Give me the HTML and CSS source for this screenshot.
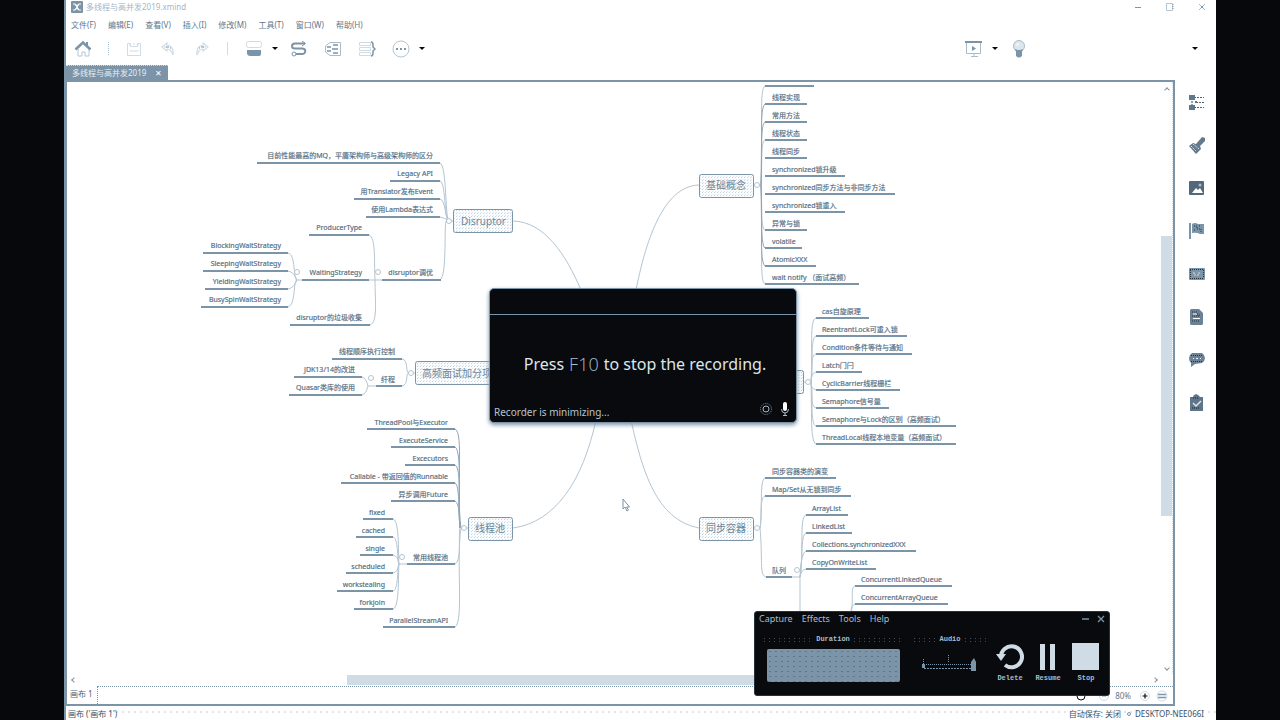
FILE: index.html
```
<!DOCTYPE html>
<html lang="zh-CN">
<head>
<meta charset="utf-8">
<title>多线程与高并发2019.xmind</title>
<link rel="stylesheet" href="styles.css">
</head>
<body>
<div class="app">
  <header class="titlebar">
    <svg class="logo" width="12" height="12" viewBox="0 0 12 12"><rect width="12" height="12" rx="1" fill="#7b94a8"/><path d="M2 3h2l2 2 2-2h2M2 9h2l2-2 2 2h2M4 3l4 6M8 3L4 9" stroke="#fff" stroke-width="1.2" fill="none"/></svg>
    <span class="title">多线程与高并发2019.xmind</span>
    <div class="wincontrols">
      <button aria-label="最小化"><svg width="8" height="8" viewBox="0 0 8 8"><path d="M1 4.500h6" stroke="#7b94a8"/></svg></button>
      <button aria-label="最大化"><svg width="8" height="8" viewBox="0 0 8 8"><path d="M.5.5h6v7h-6z" stroke="#b4c5d2" fill="none"/><path d="M7 1v6" stroke="#7b94a8" stroke-dasharray="1 1"/></svg></button>
      <button aria-label="关闭"><svg width="8" height="8" viewBox="0 0 8 8"><path d="M1 1l6 6M7 1L1 7" stroke="#a9bccb"/><path d="M3 3h2v2H3z" fill="#7b94a8"/></svg></button>
    </div>
  </header>
  <nav class="menubar">
    <button>文件(F)</button><button>编辑(E)</button><button>查看(V)</button><button>插入(I)</button><button>修改(M)</button><button>工具(T)</button><button>窗口(W)</button><button>帮助(H)</button>
  </nav>
  <div class="toolbar">
    <div class="tools">
      <button aria-label="主页"><svg width="18" height="18" viewBox="0 0 18 18"><path d="M4 9v7h4v-4h3v4h4V9" stroke="#b4c5d2" fill="none"/><path d="M1.500 9.500L9 2.500l7.500 7" stroke="#7b94a8" stroke-width="2.600" fill="none"/><path d="M13 2v4" stroke="#7b94a8" stroke-width="2"/></svg></button>
      <i class="sep dotted"></i>
      <button aria-label="保存"><svg width="18" height="16" viewBox="0 0 18 16"><path d="M2.500 2.500h3v3h7v-3h3v12h-13zM5 2v3M9 2v2M13 2v3M4.500 10h9" stroke="#cfdce6" fill="none"/></svg></button>
      <button aria-label="撤销"><svg width="18" height="16" viewBox="0 0 18 16"><path d="M8 2L3 6l5 4V8q4 0 6 6 1-9-6-10zM5 6h3" stroke="#cfdce6" stroke-width="1.200" fill="none"/><path d="M7 6h3M11 7h1" stroke="#7b94a8"/></svg></button>
      <button aria-label="重做"><svg width="18" height="16" viewBox="0 0 18 16"><path d="M10 2l5 4-5 4V8q-4 0-6 6-1-9 6-10zM13 6h-3" stroke="#cfdce6" stroke-width="1.200" fill="none"/><path d="M8 6h3M6 7h1" stroke="#7b94a8"/></svg></button>
      <i class="sep"></i>
      <button class="drop" aria-label="主题"><svg width="18" height="16" viewBox="0 0 18 16"><rect x="1.500" y="0.500" width="15" height="6" rx="2" stroke="#cfdce6" fill="none"/><path d="M2 9h14v4q0 2-2 2H5q-2 0-3-2z" fill="#7b94a8"/></svg><b></b></button>
      <button aria-label="联系"><svg width="18" height="16" viewBox="0 0 18 16"><path d="M15 2.500H5a3 2.500 0 0 0 0 5h7a3 2.500 0 0 1 0 5.500H5" stroke="#7b94a8" stroke-width="2" fill="none"/><path d="M12 0l3.500 2.500L12 5" stroke="#7b94a8" fill="none"/><circle cx="4" cy="13" r="2" fill="#fff" stroke="#7b94a8"/></svg></button>
      <button aria-label="外框"><svg width="18" height="16" viewBox="0 0 18 16"><path d="M1.500 5L6 1.500h10.500v13H6L1.500 11z" stroke="#a9bccb" fill="none"/><path d="M3 6h4M3 10h4M9 4h5M8 8h6M9 12h5" stroke="#7b94a8" stroke-width="1.500"/></svg></button>
      <button aria-label="概要"><svg width="18" height="16" viewBox="0 0 18 16"><path d="M1.500 1.500h11v3h-11zM1.500 6.500h11v3h-11zM1.500 11.500h11v3h-11z" stroke="#cfdce6" fill="none"/><path d="M13 1q2 0 2 3v2l2 2-2 2v2q0 3-2 3" stroke="#7b94a8" stroke-width="1.500" fill="none"/></svg></button>
      <button class="drop" aria-label="更多"><svg width="18" height="18" viewBox="0 0 18 18"><circle cx="9" cy="9" r="8" stroke="#b4c5d2" fill="none"/><path d="M4 8h2v2H4zM8 8h2v2H8zM12 8h2v2h-2z" fill="#7b94a8"/></svg><b></b></button>
    </div>
    <div class="tools right">
      <button class="drop" aria-label="演示"><svg width="18" height="18" viewBox="0 0 18 18"><path d="M1.500 2v11.500h14V2M9 13v4M6 16.500h7" stroke="#a9bccb" fill="none"/><path d="M0 1h17v2H0z" fill="#7b94a8"/><path d="M7 6l4 2.500L7 11z" fill="#7b94a8"/></svg><b></b></button>
      <button aria-label="头脑风暴"><svg width="14" height="18" viewBox="0 0 14 18"><circle cx="7" cy="6" r="5.500" fill="#dce6ed" stroke="#a9bccb"/><path d="M3 9q4 2 8 0l-1 3v4l-2 1.500H6L4 16v-4z" fill="#7b94a8"/><path d="M4 5h2V3" stroke="#fff" fill="none"/></svg></button>
    </div>
    <button class="drop last" aria-label="更多工具"><b></b></button>
  </div>
  <div class="tabs"><div class="tab"><span>多线程与高并发2019</span><button aria-label="关闭标签">✕</button></div></div>
  <main class="work">
    <section class="editor">
      <div class="canvasrow">
        <div class="canvas">
          <svg class="map" width="1094" height="592" viewBox="67 82 1094 592">
            <defs><pattern id="dots" width="3" height="3" patternUnits="userSpaceOnUse"><rect width="3" height="3" fill="#fafcfd"/><rect width="1" height="1" fill="#c3d2dd"/><rect x="1" y="2" width="1" height="1" fill="#dce6ed"/></pattern></defs>
            <g class="link">
              <path d="M513 221C545 222 566 255 581 290M513 528C556 522 583 480 596 420M699 185C662 186 645 245 636 290M699 528C656 520 642 470 631 420"/>
              <path d="M440 163C447 165 445 221 449 221M440 181C446 182 444 221 449 221M440 199C446 200 445 221 449 221M440 217Q445 218 449 221M440 280C447 276 444 230 446 221H453"/>
              <path d="M369 235C376 238 374 260 375 280C375 300 378 322 370 325M369 280H382M288 253C296 254 293 280 297 280M288 271Q294 272 297 280M288 289Q294 288 297 280M288 307C296 305 293 280 297 280H302"/>
              <path d="M402 359C409 360 405 373 409 373H415M402 386C409 385 405 373 409 373M362 377Q366 378 368 386Q366 394 362 395M368 386H376"/>
              <path d="M455 627C464 622 456 560 461 528H468M455 564C462 560 458 540 460 528M393 519C400 520 398 560 399 564M393 537C399 538 397 564 399 564M393 555Q398 556 399 564H407M393 573Q398 572 399 564M393 591C399 590 397 564 399 564M393 609C400 608 398 568 399 564"/>
              <path d="M753 185H761M765 86C759 88 763 130 761 185M765 284C759 282 763 240 761 185M765 140C760 142 762 170 761 185M765 230C760 228 762 200 761 185"/>
              <path d="M804 382H811M816 318C809 320 813 350 811 382C812 410 810 442 816 444M816 336C810 337 813 370 811 382M816 354C810 355 813 370 811 382M816 372Q811 373 811 382Q811 389 816 390M816 408C810 407 813 394 811 382M816 426C810 425 813 394 811 382"/>
              <path d="M753 528H760M765 478C759 480 763 510 760 528C763 560 759 575 766 577M765 496C759 498 762 520 760 528M792 577H800M806 515C799 517 804 550 800 577V615M806 533C800 535 803 565 800 577M806 551Q801 552 800 577M806 569Q801 570 800 577M855 586C850 587 854 600 851 615M855 604Q851 605 851 612"/>
            </g>
            <g class="trunk"><path d="M455 429C464 432 456 490 461 528M455 447C462 450 458 500 460 528M455 465C462 468 458 510 460 528M455 483C460 486 458 510 460 528M455 501C460 503 459 520 460 528M765 104C759 108 763 150 761 185M765 266C759 262 763 220 761 185M765 122C760 124 762 160 761 185M765 248C760 246 762 200 761 185"/></g>
            <g class="rule"><path d="M257 163H440M390 181H440M354 199H440M366 217H440M309 235H369M203 253H288M203 271H288M205 289H288M201 307H288M302 280H369M382 280H441M290 325H370M332 359H402M294 377H362M289 395H362M376 386H402M367 429H455M391 447H455M405 465H455M341 483H455M391 501H455M363 519H393M356 537H393M360 555H393M346 573H393M337 591H393M354 609H393M407 564H455M383 627H455"/>
            <path d="M765 86H814M765 104H807M765 122H807M765 140H807M765 158H807M765 176H845M765 194H895M765 212H845M765 230H807M765 248H802M765 266H816M765 284H859M816 318H869M816 336H907M816 354H912M816 372H862M816 390H900M816 408H889M816 426H956M816 444H956M765 478H836M765 496H851M806 515H848M806 533H852M806 551H916M806 569H876M766 577H792M855 586H952M855 604H948"/></g>
            <g class="knob"><circle cx="449" cy="221" r="2.500"/><circle cx="378" cy="272" r="2.500"/><circle cx="297" cy="272" r="2.500"/><circle cx="411" cy="373" r="2.500"/><circle cx="371" cy="378" r="2.500"/><circle cx="464" cy="528" r="2.500"/><circle cx="402" cy="557" r="2.500"/><circle cx="757" cy="185" r="2.500"/><circle cx="808" cy="382" r="2.500"/><circle cx="757" cy="528" r="2.500"/><circle cx="797" cy="570" r="2.500"/></g>
            <g class="box"><rect x="453.500" y="209.500" width="59" height="23" rx="2"/><rect x="415.500" y="361.500" width="90" height="23" rx="2"/><rect x="468.500" y="517.500" width="44" height="23" rx="2"/><rect x="699.500" y="174.500" width="54" height="23" rx="2"/><rect x="740.500" y="370.500" width="63" height="23" rx="2"/><rect x="699.500" y="517.500" width="54" height="23" rx="2"/></g>
            <g class="topic"><text x="461" y="225">Disruptor</text><text x="422" y="377">高频面试加分项</text><text x="475" y="532">线程池</text><text x="706" y="189">基础概念</text><text x="706" y="532">同步容器</text></g>
            <g class="leaf end">
              <text x="433" y="158">目前性能最高的MQ，平庸架构师与高级架构师的区分</text><text x="433" y="176">Legacy API</text><text x="433" y="194">用Translator发布Event</text><text x="433" y="212">使用Lambda表达式</text><text x="362" y="230">ProducerType</text><text x="281" y="248">BlockingWaitStrategy</text><text x="281" y="266">SleepingWaitStrategy</text><text x="281" y="284">YieldingWaitStrategy</text><text x="281" y="302">BusySpinWaitStrategy</text><text x="362" y="275">WaitingStrategy</text><text x="433" y="275">disruptor调优</text><text x="362" y="320">disruptor的垃圾收集</text>
              <text x="395" y="354">线程顺序执行控制</text><text x="355" y="372">JDK13/14的改进</text><text x="355" y="390">Quasar类库的使用</text><text x="395" y="382">纤程</text>
              <text x="448" y="425">ThreadPool与Executor</text><text x="448" y="443">ExecuteService</text><text x="448" y="461">Excecutors</text><text x="448" y="479">Callable - 带返回值的Runnable</text><text x="448" y="497">异步调用Future</text><text x="385" y="515">fixed</text><text x="385" y="533">cached</text><text x="385" y="551">single</text><text x="385" y="569">scheduled</text><text x="385" y="587">workstealing</text><text x="385" y="605">forkjoin</text><text x="448" y="560">常用线程池</text><text x="448" y="623">ParallelStreamAPI</text>
            </g>
            <g class="leaf">
              <text x="772" y="100">线程实现</text><text x="772" y="118">常用方法</text><text x="772" y="136">线程状态</text><text x="772" y="154">线程同步</text><text x="772" y="172">synchronized锁升级</text><text x="772" y="190">synchronized同步方法与非同步方法</text><text x="772" y="208">synchronized锁重入</text><text x="772" y="226">异常与锁</text><text x="772" y="244">volatile</text><text x="772" y="262">AtomicXXX</text><text x="772" y="280">wait notify （面试高频）</text>
              <text x="822" y="314">cas自旋原理</text><text x="822" y="332">ReentrantLock可重入锁</text><text x="822" y="350">Condition条件等待与通知</text><text x="822" y="368">Latch门闩</text><text x="822" y="386">CyclicBarrier线程栅栏</text><text x="822" y="404">Semaphore信号量</text><text x="822" y="422">Semaphore与Lock的区别（高频面试）</text><text x="822" y="440">ThreadLocal线程本地变量（高频面试）</text>
              <text x="772" y="474">同步容器类的演变</text><text x="772" y="492">Map/Set从无锁到同步</text><text x="812" y="511">ArrayList</text><text x="812" y="529">LinkedList</text><text x="812" y="547">Collections.synchronizedXXX</text><text x="812" y="565">CopyOnWriteList</text><text x="772" y="573">队列</text><text x="861" y="582">ConcurrentLinkedQueue</text><text x="861" y="600">ConcurrentArrayQueue</text>
            </g>
            <path d="M623 499v10l2-2 2 4 1.500-1-2-3h3z" fill="#fff" stroke="#7b94a8"/>
          </svg>
        </div>
        <div class="vscroll"><i class="arrow up"></i><div class="vtrack"><div class="vthumb"></div></div><i class="arrow down"></i></div>
      </div>
      <div class="hscroll"><i class="arrow left"></i><div class="htrack"><div class="hthumb"></div></div><i class="arrow rightward"></i></div>
      <div class="sheets"><span class="sheet">画布 1</span><div class="zoom">
        <svg width="12" height="12" viewBox="0 0 12 12"><circle cx="6" cy="6" r="4" fill="none" stroke="#090a0e"/></svg>
        <svg width="12" height="12" viewBox="0 0 12 12"><circle cx="6" cy="6" r="4.500" fill="none" stroke="#cfdce6"/><path d="M4 6h4" stroke="#7b94a8"/></svg>
        <span>80%</span>
        <svg width="12" height="12" viewBox="0 0 12 12"><circle cx="6" cy="6" r="4.500" fill="none" stroke="#cfdce6"/><path d="M3.500 6h5M6 3.500v5" stroke="#090a0e" stroke-width="1.200"/></svg>
        <svg width="12" height="12" viewBox="0 0 12 12"><circle cx="6" cy="6" r="5" fill="none" stroke="#cfdce6"/><path d="M2 4.500h8M2 7.500h8" stroke="#7b94a8" stroke-width="1.500"/></svg>
      </div></div>
    </section>
    <aside class="side">
      <svg width="18" height="18" viewBox="0 0 18 18"><path d="M6 4.500h10M8 9.500h8M6 14.500h10M4 5v9" stroke="#4d6273" stroke-width="1.200" fill="none" stroke-dasharray="2 1"/><path d="M1 2h6v5H1zM1 12h6v5H1zM7 8h2v2H7z" fill="#5f788c"/></svg>
      <svg width="18" height="18" viewBox="0 0 18 18"><path d="M14 1l3 1v3l-5 5 1 3-5 5-7-8 4-3 3 1z" fill="#64798c"/><path d="M5 8l6 5M3 10l5 5" stroke="#dce6ed" stroke-dasharray="2 1"/></svg>
      <svg width="18" height="18" viewBox="0 0 18 18"><rect x="1" y="2" width="15" height="14" rx="1" fill="#53687a"/><path d="M4 14l4-5 2 2 2-2 3 5z" fill="#fff"/><circle cx="12" cy="6" r="1.500" fill="#a9bccb"/></svg>
      <svg width="18" height="18" viewBox="0 0 18 18"><path d="M1 1h2v16H1zM4 2q3-2 6 0h6v10h-4q-4-2-8-1z" fill="#7b94a8"/><path d="M6 4h3v3h4v3M11 4h2M6 8h2" stroke="#26323c" stroke-dasharray="1 1" fill="none"/></svg>
      <svg width="18" height="18" viewBox="0 0 18 18"><rect x="1" y="3" width="16" height="12" rx="1" fill="#7b94a8"/><path d="M2 4.500h14M2 13.500h14M2.500 5v8M15.500 5v8" stroke="#26323c" stroke-dasharray="1 1"/><path d="M5 8h3M10 8h3M6 10h6" stroke="#cfdce6" stroke-dasharray="2 1"/></svg>
      <svg width="18" height="18" viewBox="0 0 18 18"><path d="M3 1h8l4 4v10q0 2-1 2H3q-1 0-1-2V2z" fill="#6b8296"/><path d="M4 4h5v3h3M4 8h8M4 13h8" stroke="#26323c" stroke-dasharray="1 1" fill="none"/><path d="M5 6h4M5 10.500h7" stroke="#fff"/></svg>
      <svg width="18" height="18" viewBox="0 0 18 18"><path d="M4 2h10q3 2 3 5t-3 5l-7 1-4 3v-4q-2-2-2-5t3-5z" fill="#6b8296"/><path d="M3 4.500h12M3 10.500h12" stroke="#26323c" stroke-dasharray="1 1"/><path d="M5 7.500h1M8 7.500h2M12 7.500h1" stroke="#fff"/></svg>
      <svg width="18" height="18" viewBox="0 0 18 18"><path d="M2 3h3q0-2 3-3 3 1 4 3h3v14H2z" fill="#5f768a"/><path d="M5 4h6M4 14h8" stroke="#16202a" stroke-dasharray="1 1"/><path d="M5 9l3 3 5-5" stroke="#dce6ed" stroke-width="1.500" fill="none"/></svg>
    </aside>
  </main>
  <footer class="status"><span>画布 ('画布 1')</span><span class="save">自动保存: 关闭</span><svg width="6" height="6" viewBox="0 0 6 6"><circle cx="3" cy="3" r="1.500" fill="none" stroke="#7b94a8"/></svg><span class="host">DESKTOP-NEE066I</span></footer>
</div>

<div class="notice" role="dialog" aria-label="Recorder">
  <div class="noticehead"></div>
  <p>Press <span class="key">F10</span> to stop the recording.</p>
  <div class="noticefoot"><span>Recorder is minimizing...</span>
    <svg width="34" height="16" viewBox="0 0 34 16"><circle cx="9" cy="7" r="5.500" stroke="#7b94a8" stroke-dasharray="1 1" fill="none"/><circle cx="9" cy="7" r="3" stroke="#a9bccb" fill="none"/><rect x="26" y="0" width="4" height="9" rx="2" fill="#fff"/><path d="M24.500 7q0 4 3.500 4t3.500-4M28 11v3M26 13.500h4" stroke="#a9bccb" fill="none"/></svg>
  </div>
</div>

<div class="recorder" role="dialog" aria-label="Capture">
  <div class="rechead"><button>Capture</button><button>Effects</button><button>Tools</button><button>Help</button><span class="recwin"><button aria-label="Minimize"><svg width="8" height="8" viewBox="0 0 8 8"><path d="M1 4h7" stroke="#7b94a8" stroke-width="1.500"/></svg></button><button aria-label="Close"><svg width="8" height="8" viewBox="0 0 8 8"><path d="M1 1l6 6M7 1L1 7" stroke="#7b94a8" stroke-width="1.300"/></svg></button></span></div>
  <div class="recbody">
    <div class="duration"><div class="legend"><i></i>Duration<i></i></div><div class="screen"></div></div>
    <div class="audio"><div class="legend"><i></i>Audio<i></i></div>
      <svg width="60" height="20" viewBox="0 0 60 20"><path d="M3.500 5v8M28.500 1v8" stroke="#7b94a8" stroke-dasharray="1 1"/><path d="M4 10.500h50" stroke="#7b94a8" stroke-dasharray="1 1"/><path d="M4 14.500h50" stroke="#7b94a8" stroke-dasharray="2 1"/><path d="M2 10h3v4H2zM51 8l3-4 2 4v9h-5z" fill="#7b94a8"/></svg></div>
    <button class="act"><svg width="28" height="28" viewBox="0 0 28 28"><path d="M5 14A10.500 10.500 0 1 1 9 22" fill="none" stroke="#cfdce6" stroke-width="4"/><path d="M0 11h10l-5 7z" fill="#cfdce6"/></svg>Delete</button>
    <button class="act"><svg width="28" height="28" viewBox="0 0 28 28"><path d="M6 1h5v26H6zM16 1h5v26h-5z" fill="#cfdce6"/></svg>Resume</button>
    <button class="act"><svg width="28" height="28" viewBox="0 0 28 28"><rect x="0" y="0" width="27" height="27" fill="#cfdce6"/></svg>Stop</button>
  </div>
</div>
</body>
</html>
```
FILE: styles.css
```
* { box-sizing: border-box; }
body {
  margin: 0;
  height: 100vh;
  overflow: hidden;
  position: relative;
  background: #07080c;
  color: #7b94a8;
  font-family: "Noto Sans", "Noto Sans CJK SC", sans-serif;
  font-size: 8px;
  line-height: 12px;
}
button {
  border: 0;
  padding: 0;
  background: none;
  color: inherit;
  font: inherit;
  display: flex;
  align-items: center;
  white-space: nowrap;
}
svg { display: block; flex: none; }
.app {
  width: 90%;
  height: 100%;
  margin: 0 auto;
  background: #fff;
  border-left: 2px solid #7b94a8;
  display: flex;
  flex-direction: column;
}
.titlebar { height: 14px; flex: none; display: flex; align-items: center; padding: 0 10px 0 5px; gap: 3px; }
.title { color: #a3b6c5; line-height: 14px; }
.wincontrols { margin-left: auto; display: flex; gap: 24px; }
.menubar { height: 20px; flex: none; display: flex; align-items: center; gap: 12px; padding: 2px 0 0 5px; color: #5f788c; }
.toolbar { height: 29px; flex: none; display: flex; align-items: center; padding: 0 18px 0 8px; }
.tools { display: flex; align-items: center; gap: 16px; }
.tools.right { margin-left: auto; gap: 18px; }
.sep { width: 1px; height: 13px; margin-right: 1px; background: #cfdce6; }
.sep.dotted { background: none; border-left: 1px dotted #a9bccb; margin: 0; }
.drop { gap: 9px; margin-right: -4px; }
.drop b { border: 3px solid transparent; border-top-color: #090a0e; border-bottom: 0; }
.drop.last { margin: 0 0 0 166px; }
.tabs { height: 17px; flex: none; display: flex; align-items: flex-end; }
.tab { height: 15px; background: #7b94a8; border-top: 1px dotted #cfdce6; color: #e6edf2; display: flex; align-items: center; gap: 9px; padding: 0 6px; }
.tab button { color: #fff; }
.work { flex: 1; min-height: 0; display: flex; }
.editor { flex: 1; min-width: 0; display: flex; flex-direction: column; border: 2px solid #7b94a8; border-left-width: 1px; }
.canvasrow { flex: 1; min-height: 0; display: flex; }
.canvas { flex: 1; min-width: 0; overflow: hidden; }
.vscroll { width: 12px; display: flex; flex-direction: column; align-items: center; padding: 6px 0 4px; border-right: 1px dotted #cfdce6; }
.vtrack { flex: 1; width: 100%; padding-top: 144px; }
.vthumb { height: 65%; background: #cfdce6; }
.hscroll { height: 12px; flex: none; display: flex; align-items: center; padding: 0 16px 0 5px; }
.htrack { flex: 1; height: 10px; padding-left: 271px; }
.hthumb { height: 100%; width: 60%; background: #cfdce6; }
.arrow { width: 4px; height: 4px; border: solid #7b94a8; border-width: 1px 0 0 1px; }
.up { transform: rotate(45deg); }
.down { transform: rotate(225deg); }
.left { transform: rotate(-45deg); }
.rightward { transform: rotate(135deg); }
.sheets { height: 18px; flex: none; display: flex; }
.sheet { width: 31px; padding: 2px 0 0 3px; border-right: 1px dotted #7b94a8; color: #4d6273; white-space: nowrap; }
.zoom { flex: 1; border-top: 1px dotted #7b94a8; display: flex; align-items: center; justify-content: flex-end; gap: 5px; padding-right: 5px; }
.zoom svg:first-child { margin-right: 6px; }
.zoom span { margin-right: 3px; color: #5f788c; }
.side { width: 41px; flex: none; display: flex; flex-direction: column; align-items: center; gap: 25px; padding: 13px 0 0 2px; }
.status { height: 14px; flex: none; display: flex; align-items: center; padding: 2px 12px 0 2px; color: #3f5261; background: radial-gradient(circle, #dce6ed 1px, transparent 1px) 0 0 / 6px 12px; white-space: nowrap; }
.save { margin-left: auto; margin-right: 5px; }
.host { margin-left: 3px; }

.link path { fill: none; stroke: #b4c5d2; }
.trunk path { fill: none; stroke: #8fa6b8; }
.rule path { fill: none; stroke: #7b94a8; stroke-width: 2px; }
.knob circle { fill: #fff; stroke: #b4c5d2; }
.box rect { fill: url(#dots); stroke: #7b94a8; }
.topic text { font-size: 10px; fill: #6c869b; }
.leaf text { font-size: 7px; fill: #3f5668; stroke: #7b94a8; stroke-width: 0.2px; }
.end text { text-anchor: end; }

.notice, .recorder { position: absolute; background: #090a0e; }
.notice {
  left: 489px;
  top: 288px;
  width: 308px;
  height: 135px;
  border: 1px solid #7b94a8;
  border-radius: 5px;
  box-shadow: 0 2px 4px #7b94a8;
  display: flex;
  flex-direction: column;
  color: #dce6ed;
}
.noticehead { height: 26px; border-bottom: 1px solid #7b94a8; }
.notice p { flex: 1; margin: 0; display: flex; align-items: center; justify-content: center; gap: 5px; font-size: 16px; line-height: 20px; padding: 10px 0 0 4px; white-space: nowrap; }
.key { font-family: "Open Sans", sans-serif; font-size: 18px; font-weight: 300; color: #a9bccb; }
.noticefoot { display: flex; align-items: flex-end; justify-content: space-between; padding: 0 5px 4px 4px; font-size: 10px; line-height: 12px; color: #b4c5d2; }

.recorder { left: 754px; top: 611px; width: 356px; height: 85px; border: 1px solid #26323c; border-radius: 3px; color: #a9bccb; }
.rechead { display: flex; gap: 9px; padding: 1px 4px 0; font-size: 9px; }
.recwin { margin-left: auto; display: flex; gap: 8px; }
.recbody { display: flex; align-items: flex-start; padding: 9px 4px 0 7px; font-family: "Liberation Mono", monospace; font-size: 7px; line-height: 10px; }
.legend { display: flex; align-items: center; gap: 2px; font-family: "Liberation Mono", monospace; font-size: 7px; font-weight: bold; }
.legend i { flex: 1; height: 5px; background: radial-gradient(circle, #7b94a8 1px, transparent 1px) 0 0 / 5px 3px; opacity: 0.5; }
.duration { width: 142px; }
.screen { height: 33px; margin: 5px 4px 0 5px; border-radius: 2px; background: radial-gradient(circle, #60778a 1px, transparent 1px) 0 0 / 6px 5px #7b94a8; }
.audio { width: 76px; margin: 0 auto 0 8px; }
.audio svg { margin: 10px auto 0; }
.act { flex-direction: column; gap: 2px; width: 38px; margin-top: 9px; font-weight: bold; }
```
